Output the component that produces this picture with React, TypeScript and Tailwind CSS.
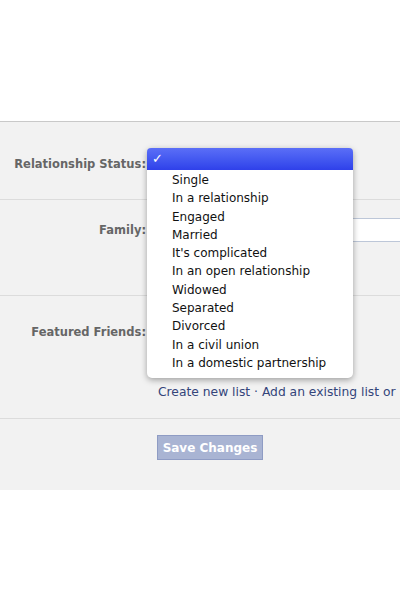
import React from 'react';

const options = [
  'Single',
  'In a relationship',
  'Engaged',
  'Married',
  "It's complicated",
  'In an open relationship',
  'Widowed',
  'Separated',
  'Divorced',
  'In a civil union',
  'In a domestic partnership',
];

const font = { fontFamily: '"DejaVu Sans", "Lucida Grande", sans-serif' };

function Label({ children }: { children: React.ReactNode }) {
  return (
    <div className="w-[148px] shrink-0 pr-[2px] text-right text-[11.5px] font-bold text-[#666]">
      {children}
    </div>
  );
}

export default function App() {
  return (
    <div className="w-[400px] h-[600px] overflow-hidden bg-white" style={font}>
      <div className="h-[121px]" />
      {/* Settings panel */}
      <div className="relative bg-[#f2f2f2] border-t border-[#c9c9c9]">
        <div className="flex h-[78px] items-center border-b border-[#dcdcdc] pt-[8px]">
          <Label>Relationship Status:</Label>
        </div>

        <div className="flex h-[96px] items-start border-b border-[#dcdcdc] pt-[22px] overflow-hidden">
          <Label>Family:</Label>
          <div className="ml-[4px] mt-[-4px] h-[24px] w-[300px] shrink-0 border border-[#bdc7d8] bg-white" />
        </div>

        <div className="flex h-[123px] flex-col border-b border-[#dcdcdc] pt-[28px] overflow-hidden">
          <Label>Featured Friends:</Label>
          <div className="ml-[158px] mt-[42px] whitespace-nowrap text-[12.3px] text-[#34457a]">
            Create new list · Add an existing list or
          </div>
        </div>

        <div className="flex h-[71px] items-start pt-[16px] pl-[157px]">
          <button className="h-[25px] w-[106px] border border-[#8f9cc4] bg-[#a9b4d3] text-[12px] font-bold text-white">
            Save Changes
          </button>
        </div>

        {/* Open dropdown menu */}
        <div className="absolute left-[147px] top-[26px] w-[206px] rounded-[5px] bg-white pb-[6px] shadow-[0_2px_6px_rgba(0,0,0,0.35)]">
          <div className="flex h-[22px] items-center rounded-t-[4px] bg-gradient-to-b from-[#5b6ef7] to-[#2f40ea] pl-[5px] text-[13px] text-white">
            ✓
          </div>
          <div className="pt-[1px]">
            {options.map((o) => (
              <div key={o} className="h-[18.3px] pl-[25px] text-[12px] leading-[18px] text-[#111]">
                {o}
              </div>
            ))}
          </div>
        </div>
      </div>
    </div>
  );
}
